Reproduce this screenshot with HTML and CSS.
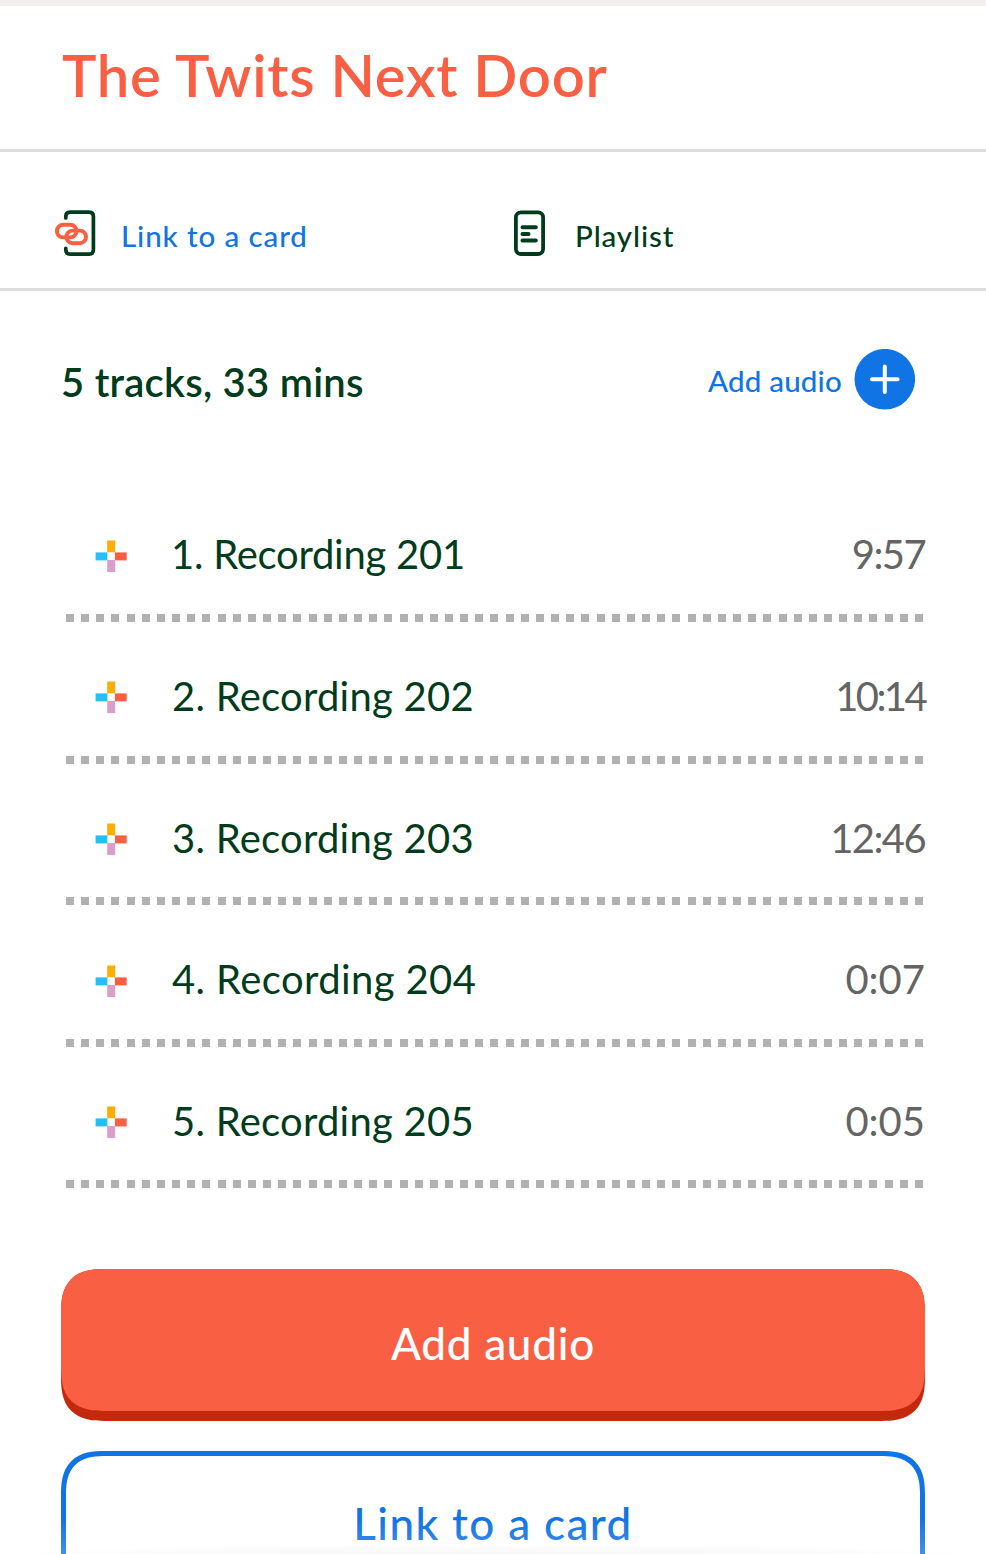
FILE: index.html
```html
<!DOCTYPE html>
<html lang="en">
<head>
<meta charset="utf-8">
<title>The Twits Next Door</title>
<link rel="stylesheet" href="styles.css">
</head>
<body>
<svg class="defs" aria-hidden="true">
  <symbol id="spark" viewBox="0 0 32 32">
    <rect x="12.2" y="0.5" width="8" height="12" fill="#fbac05"/>
    <rect x="0.6" y="12.4" width="12" height="8" fill="#22c0f5"/>
    <rect x="19.7" y="12.4" width="12" height="8" fill="#f95f43"/>
    <rect x="12.2" y="20" width="8" height="12" fill="#d99fca"/>
    <rect x="12.6" y="12.5" width="7.1" height="7.5" fill="#fff"/>
  </symbol>
</svg>
<main class="page">
  <header class="header"><h1 class="title">The Twits Next Door</h1></header>
  <nav class="tabs">
    <a class="tab tab-link">
      <svg class="tab-icon" width="46" height="50" viewBox="0 0 46 50" fill="none" stroke-linecap="round">
        <path d="M10.8 9V7.500Q10.800 3.100 15.200 3.100H34Q38.400 3.100 38.400 7.500V40.700Q38.400 45.100 34 45.100H15.200Q10.800 45.100 10.800 40.700V39.300" stroke="#003c1c" stroke-width="3.700"/>
        <rect x="1.900" y="15.800" width="19.600" height="12.600" rx="6.300" stroke="#f95f43" stroke-width="3.900"/>
        <rect x="11.400" y="21.600" width="19.600" height="12.600" rx="6.300" stroke="#f95f43" stroke-width="3.900"/>
      </svg>
      <span class="tab-label">Link to a card</span>
    </a>
    <a class="tab tab-list">
      <svg class="tab-icon" width="34" height="50" viewBox="0 0 34 50" fill="none" stroke="#003c1c" stroke-linecap="round">
        <rect x="2.900" y="3.300" width="27.200" height="41.700" rx="5" stroke-width="3.800"/>
        <path d="M9.500 18.300H22.800M9.500 25H15.500M9.500 31.600H22.800" stroke-width="4"/>
      </svg>
      <span class="tab-label">Playlist</span>
    </a>
  </nav>
  <section class="content">
    <div class="summary">
      <h2 class="count">5 tracks, 33 mins</h2>
      <div class="add">
        <span class="add-label">Add audio</span>
        <svg class="add-icon" width="61" height="61" viewBox="0 0 61 61">
          <circle cx="30.800" cy="30.200" r="30.300" fill="#1174e4"/>
          <path d="M30.800 17.500V43M18 30.300H43.600" stroke="#fff" stroke-width="4" stroke-linecap="round"/>
        </svg>
      </div>
    </div>
    <ol class="tracks">
      <li class="track"><svg class="spark"><use href="#spark"/></svg><span class="name name-ones">1. Recording 201</span><span class="time time-tight">9:57</span></li>
      <li class="track"><svg class="spark"><use href="#spark"/></svg><span class="name">2. Recording 202</span><span class="time time-ones">10:14</span></li>
      <li class="track"><svg class="spark"><use href="#spark"/></svg><span class="name">3. Recording 203</span><span class="time time-tight">12:46</span></li>
      <li class="track"><svg class="spark"><use href="#spark"/></svg><span class="name name-wide">4. Recording 204</span><span class="time">0:07</span></li>
      <li class="track"><svg class="spark"><use href="#spark"/></svg><span class="name">5. Recording 205</span><span class="time">0:05</span></li>
    </ol>
    <div class="button primary"><div class="face"><span class="primary-label">Add audio</span></div></div>
    <div class="button outline"><span class="outline-label">Link to a card</span></div>
  </section>
  <div class="fade"></div>
</main>
</body>
</html>
```

FILE: styles.css
```css
* { box-sizing: border-box; }
body { margin: 0; background: #fff; font-family: Lato, "Open Sans", sans-serif; color: #003c1c; }
.defs { display: none; }
.page { position: relative; height: 1554px; overflow: hidden; border-top: 6px solid #f4efef; }
.header { height: 146px; padding: 34px 62px 0; border-bottom: 3px solid #dcdcdc; }
.title { margin: 0; font-size: 58px; line-height: 70px; font-weight: 600; letter-spacing: .74px; color: #f95f43; white-space: nowrap; }
.tabs { display: flex; height: 139px; padding-top: 57px; border-bottom: 3px solid #dcdcdc; }
.tab { display: flex; height: 50px; white-space: nowrap; }
.tab-link { width: 458px; padding-left: 55px; color: #1174e4; }
.tab-list { padding-left: 55px; }
.tab-icon { flex: none; }
.tab-label { font-size: 29.5px; line-height: 54px; font-weight: 500; letter-spacing: .9px; }
.tab-link .tab-label { margin-left: 20px; }
.tab-list .tab-label { margin-left: 28px; }
.content { padding: 58px 61px 0; }
.summary { display: flex; justify-content: space-between; height: 61px; padding-right: 10px; white-space: nowrap; }
.count { margin: 0; font-size: 40px; line-height: 67px; font-weight: 600; letter-spacing: .25px; }
.add { display: flex; gap: 12px; color: #1174e4; }
.add-label { font-size: 29.5px; line-height: 64px; font-weight: 500; letter-spacing: .2px; }
.tracks { list-style: none; margin: 70.4px 0 0; padding: 0; }
.track { display: flex; align-items: flex-start; height: 141.6px; padding: 34px 0 0 34px; background: repeating-linear-gradient(90deg, #b1b1b1 0 8px, transparent 8px 15.16px) 5px bottom / 857px 8px no-repeat; white-space: nowrap; }
.spark { width: 32px; height: 32px; margin-top: 25.5px; flex: none; }
.name { margin-left: 45px; font-size: 40px; line-height: 80px; letter-spacing: .25px; }
.name-ones { margin-left: 44px; letter-spacing: -.25px; }
.name-wide { letter-spacing: .4px; }
.time { margin-left: auto; font-size: 40px; line-height: 80px; color: #646464; }
.time-tight { letter-spacing: -1.6px; }
.time-ones { letter-spacing: -2.6px; }
.button { height: 151.5px; border-radius: 36px; text-align: center; font-weight: 500; font-size: 44px; white-space: nowrap; }
.primary { margin-top: 81px; background: #c4290e; color: #fff; letter-spacing: .75px; }
.face { height: 142px; border-radius: 36px; background: #f95f43; line-height: 149px; }
.outline { margin-top: 30.5px; border: 5px solid #1174e4; color: #1174e4; line-height: 134px; letter-spacing: 1.4px; }
@supports (corner-shape: superellipse(1.4)) {
  .button, .face { border-radius: 44px; corner-shape: superellipse(1.4); }
}
.fade { position: absolute; left: 0; right: 0; bottom: 0; height: 36px; background: radial-gradient(ellipse 480px 10px at 50% 100%, rgba(0,0,0,.03), rgba(0,0,0,.02) 60%, transparent), linear-gradient(rgba(255,255,255,0), rgba(255,255,255,.2)); }
```
